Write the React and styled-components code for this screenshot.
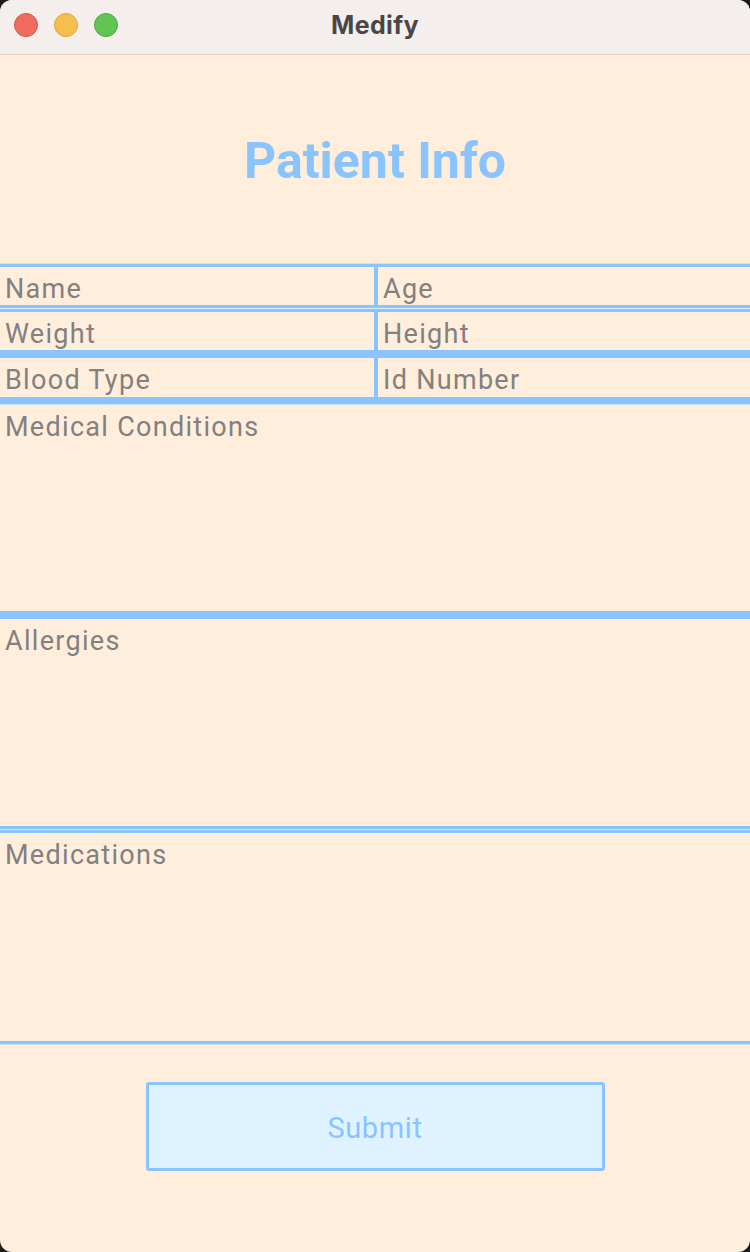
import React from 'react';
import styled, { createGlobalStyle } from 'styled-components';

const blue = '#89c4ff';
const pale = '#c9e2f7';

const Global = createGlobalStyle`
  html, body {
    margin: 0;
    padding: 0;
    background: #1c1c1c;
  }
  * { box-sizing: border-box; }
`;

const Window = styled.div`
  width: 750px;
  height: 1252px;
  background: #ffeedb;
  border-radius: 12px;
  overflow: hidden;
  display: flex;
  flex-direction: column;
  font-family: Roboto, "Liberation Sans", sans-serif;
`;

const TitleBar = styled.div`
  height: 55px;
  flex-shrink: 0;
  background: #f4eeec;
  border-bottom: 1px solid #e3cfbd;
  display: flex;
  align-items: center;
  justify-content: center;
  position: relative;
`;

const Lights = styled.div`
  position: absolute;
  left: 14px;
  top: 13px;
  display: flex;
  gap: 16px;
`;

const Light = styled.span`
  width: 24px;
  height: 24px;
  border-radius: 50%;
  background: ${p => p.color};
  border: 1px solid ${p => p.edge};
`;

const WindowTitle = styled.div`
  font-family: "Inter", Roboto, sans-serif;
  font-weight: 700;
  font-size: 25px;
  letter-spacing: 0.4px;
  color: #4a4646;
  margin-top: -4px;
`;

const Heading = styled.h1`
  margin: 0;
  height: 208px;
  flex-shrink: 0;
  display: flex;
  align-items: center;
  justify-content: center;
  padding-top: 3px;
  color: ${blue};
  font-size: 50px;
  letter-spacing: 0;
  font-weight: 700;
`;

const Line = styled.div`
  flex-shrink: 0;
  height: ${p => p.h}px;
  background: ${blue};
  border-top: ${p => (p.lightTop ? `1px solid ${pale}` : 'none')};
  border-bottom: ${p => (p.lightBottom ? `1px solid ${pale}` : 'none')};
`;

const DoubleLine = styled.div`
  flex-shrink: 0;
  height: 7px;
  background: linear-gradient(${blue} 0 3px, #d7ecff 3px 4px, ${blue} 4px 7px);
`;

const Row = styled.div`
  display: grid;
  grid-template-columns: 374px 4px 1fr;
  height: ${p => p.h}px;
  flex-shrink: 0;
`;

const Divider = styled.div`
  background: ${blue};
`;

const Field = styled.div`
  height: ${p => p.h}px;
  flex-shrink: 0;
  overflow: hidden;
  padding: 3px 0 0 5px;
  font-size: 27px;
  letter-spacing: 1.3px;
  line-height: 38px;
  color: #828080;
`;

const Footer = styled.div`
  flex: 1;
  display: flex;
  justify-content: center;
  padding-top: 37px;
`;

const SubmitButton = styled.button`
  width: 459px;
  height: 89px;
  background: #def3ff;
  border: 3px solid ${blue};
  border-radius: 3px;
  color: ${blue};
  font-family: Roboto, "Liberation Sans", sans-serif;
  font-size: 29px;
  letter-spacing: 0.6px;
  font-weight: 400;
  padding-top: 4px;
  cursor: pointer;
`;

const App = () => (
  <>
    <Global />
    <Window>
      <TitleBar>
        <Lights>
          <Light color="#ef6a5f" edge="#d9544b" />
          <Light color="#f6be4f" edge="#dea53c" />
          <Light color="#61c554" edge="#4ea941" />
        </Lights>
        <WindowTitle>Medify</WindowTitle>
      </TitleBar>
      <Heading>Patient Info</Heading>
      <Line h={4} lightTop />
      <Row h={38}>
        <Field h={38}>Name</Field>
        <Divider />
        <Field h={38}>Age</Field>
      </Row>
      <DoubleLine />
      <Row h={38}>
        <Field h={38}>Weight</Field>
        <Divider />
        <Field h={38}>Height</Field>
      </Row>
      <Line h={8} />
      <Row h={39}>
        <Field h={39}>Blood Type</Field>
        <Divider />
        <Field h={39}>Id Number</Field>
      </Row>
      <Line h={8} lightBottom />
      <Field h={206}>Medical Conditions</Field>
      <Line h={8} />
      <Field h={207}>Allergies</Field>
      <DoubleLine />
      <Field h={208}>Medications</Field>
      <Line h={4} lightBottom />
      <Footer>
        <SubmitButton>Submit</SubmitButton>
      </Footer>
    </Window>
  </>
);

export default App;
